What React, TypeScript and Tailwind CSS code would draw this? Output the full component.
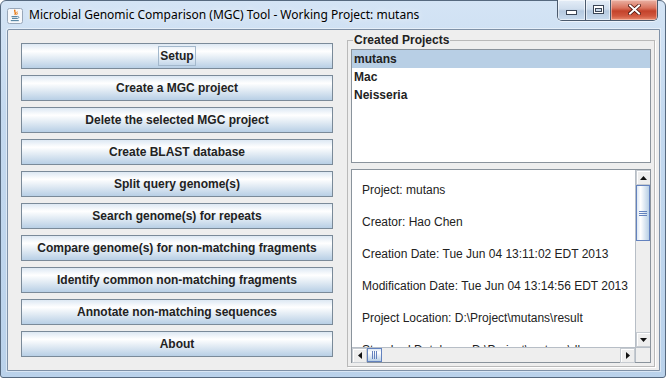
import React from "react";

const actions = [
  "Setup",
  "Create a MGC project",
  "Delete the selected MGC project",
  "Create BLAST database",
  "Split query genome(s)",
  "Search genome(s) for repeats",
  "Compare genome(s) for non-matching fragments",
  "Identify common non-matching fragments",
  "Annotate non-matching sequences",
  "About",
];

const projects = ["mutans", "Mac", "Neisseria"];

const details = [
  "Project: mutans",
  "Creator: Hao Chen",
  "Creation Date: Tue Jun 04 13:11:02 EDT 2013",
  "Modification Date: Tue Jun 04 13:14:56 EDT 2013",
  "Project Location: D:\\Project\\mutans\\result",
  "Standard Database: D:\\Project\\mutans\\db",
];

type Dir = "up" | "down" | "left" | "right";

const Arrow = ({ dir }: { dir: Dir }) => {
  const vertical = dir === "up" || dir === "down";
  const points = {
    up: "0,4 7,4 3.5,0",
    down: "0,0 7,0 3.5,4",
    left: "4,0 4,7 0,3.5",
    right: "0,0 0,7 4,3.5",
  }[dir];
  return (
    <svg width={vertical ? 7 : 4} height={vertical ? 4 : 7} viewBox={vertical ? "0 0 7 4" : "0 0 4 7"}>
      <polygon points={points} fill="#111" />
    </svg>
  );
};

const ScrollButton = ({ dir }: { dir: Dir }) => (
  <div className="flex size-[15px] shrink-0 items-center justify-center border border-[#c6cbd1] bg-[#eeeeee] shadow-[inset_1px_1px_0_#ffffff]">
    <Arrow dir={dir} />
  </div>
);

const JavaIcon = () => (
  <svg width="16" height="16" viewBox="0 0 16 16">
    <rect x="0.5" y="0.5" width="15" height="15" rx="2" fill="#f6f8fb" stroke="#98a7b9" />
    <path d="M8.2 1.8c-2 1.8 1.6 2.6 -0.4 5" stroke="#e76f00" strokeWidth="1.3" fill="none" />
    <path d="M10.2 3.6c-1.2 1 1 1.6 -0.6 3.2" stroke="#e76f00" strokeWidth="1" fill="none" />
    <path d="M4.5 8.6h6" stroke="#5382a1" strokeWidth="1.1" />
    <path d="M5 10.4h5.2" stroke="#5382a1" strokeWidth="1.1" />
    <path d="M10.6 8.4c1.8 0 1.6 2 -0.4 2.2" stroke="#5382a1" strokeWidth="0.9" fill="none" />
    <path d="M3.8 12.6h8" stroke="#5382a1" strokeWidth="1.1" />
  </svg>
);

const CaptionButtons = () => (
  <div className="-mt-[1px] mr-[7px] flex h-[21px] overflow-hidden rounded-b-[5px] border border-t-0 border-[#4b5a6d] shadow-[0_1px_0_rgba(255,255,255,0.6)]">
    <div className="flex w-[28px] items-end justify-center border-r border-[#4b5a6d] bg-[linear-gradient(180deg,#e4edf7_0%,#cfdded_45%,#b5c9df_55%,#c8dbee_100%)] pb-[5px] shadow-[inset_0_0_0_1px_rgba(255,255,255,0.55)]">
      <svg width="11" height="5" viewBox="0 0 11 5">
        <rect x="0" y="0" width="11" height="5" fill="#3a4555" />
        <rect x="1" y="1" width="9" height="3" fill="#ffffff" />
      </svg>
    </div>
    <div className="flex w-[25px] items-center justify-center border-r border-[#4b5a6d] bg-[linear-gradient(180deg,#e4edf7_0%,#cfdded_45%,#b5c9df_55%,#c8dbee_100%)] pb-[2px] shadow-[inset_0_0_0_1px_rgba(255,255,255,0.55)]">
      <svg width="11" height="9" viewBox="0 0 11 9">
        <rect x="0" y="0" width="11" height="9" fill="#3a4555" />
        <rect x="1" y="1" width="9" height="7" fill="#ffffff" />
        <rect x="2" y="3" width="7" height="4" fill="#3a4555" />
        <rect x="3" y="4" width="5" height="2" fill="#c9d9ea" />
      </svg>
    </div>
    <div className="flex w-[46px] items-center justify-center bg-[linear-gradient(180deg,#eab2a4_0%,#d9735d_40%,#c4432b_55%,#d0583f_80%,#e98c6f_100%)] pb-[2px] shadow-[inset_0_0_0_1px_rgba(255,220,210,0.5)]">
      <svg width="13" height="11" viewBox="0 0 13 11">
        <path d="M2 1.5l9 8M11 1.5l-9 8" stroke="#4a140c" strokeWidth="3.6" strokeLinecap="square" />
        <path d="M2 1.5l9 8M11 1.5l-9 8" stroke="#ffffff" strokeWidth="2" strokeLinecap="square" />
      </svg>
    </div>
  </div>
);

const VerticalScrollBar = () => (
  <div className="flex w-[15px] flex-col border-l border-[#b7bec6] bg-[#eeeeee]">
    <ScrollButton dir="up" />
    <div className="flex h-[56px] items-center justify-center border border-[#6382be] bg-[linear-gradient(90deg,#dde8f3_0%,#ffffff_30%,#b8cfe5_100%)]">
      <div className="flex flex-col gap-[1px]">
        <div className="h-[1px] w-[8px] bg-[#6382be]" />
        <div className="h-[1px] w-[8px] bg-[#6382be]" />
        <div className="h-[1px] w-[8px] bg-[#6382be]" />
      </div>
    </div>
    <div className="flex-1" />
    <ScrollButton dir="down" />
  </div>
);

const HorizontalScrollBar = () => (
  <div className="flex h-[15px] flex-1 border-t border-[#b7bec6] bg-[#eeeeee]">
    <ScrollButton dir="left" />
    <div className="flex w-[15px] items-center justify-center border border-[#6382be] bg-[linear-gradient(180deg,#dde8f3_0%,#ffffff_30%,#b8cfe5_100%)]">
      <div className="flex gap-[1px]">
        <div className="h-[8px] w-[1px] bg-[#6382be]" />
        <div className="h-[8px] w-[1px] bg-[#6382be]" />
        <div className="h-[8px] w-[1px] bg-[#6382be]" />
      </div>
    </div>
    <div className="flex-1" />
    <ScrollButton dir="right" />
  </div>
);

export default function App() {
  return (
    <div className="flex h-[378px] w-[666px] flex-col rounded-t-[6px] rounded-b-[3px] border border-[#56697f] bg-[linear-gradient(180deg,#d4e4f5_0%,#c4d9ef_30%,#bad2eb_100%)] font-['Liberation_Sans',Arial,sans-serif]">
      <div className="flex h-[28px] shrink-0 items-start">
        <div className="ml-[6px] mt-[7px]">
          <JavaIcon />
        </div>
        <div className="ml-[6px] mt-[6px] flex-1 font-['Noto_Sans',sans-serif] text-[12px] leading-[16px] text-black [text-shadow:0_0_6px_rgba(255,255,255,0.95)]">
          Microbial Genomic Comparison (MGC) Tool - Working Project: mutans
        </div>
        <CaptionButtons />
      </div>

      <div className="ml-[6px] mr-[5px] mb-[6px] flex flex-1 rounded-tl-[2px] border border-[#7f91a7] bg-[#eeeeee] shadow-[0_0_0_1px_rgba(255,255,255,0.45)]">
        <div className="flex flex-col gap-[6px] pl-[13px] pt-[13px]">
          {actions.map((label, i) => (
            <button
              key={label}
              className="flex h-[26px] w-[312px] items-center justify-center border border-[#7a8a99] bg-[linear-gradient(180deg,#dde8f3_0%,#ffffff_30%,#b8cfe5_100%)] text-[12px] font-bold leading-[14px] text-[#222]"
            >
              {i === 0 ? (
                <span className="border border-[#a3b8cc] px-[1px] py-[2px]">{label}</span>
              ) : (
                label
              )}
            </button>
          ))}
        </div>

        <fieldset className="ml-[14px] mt-[4px] h-[333px] w-[308px] border border-[#b9b9b9] px-[3px] shadow-[1px_1px_0_#ffffff]">
          <legend className="ml-[2px] px-[1px] text-[12px] font-bold leading-[13px] text-[#222]">Created Projects</legend>
          <div className="mt-[2px] h-[114px] border border-[#8a939c] bg-white">
            {projects.map((p, i) => (
              <div
                key={p}
                className={`h-[18px] pl-[2px] text-[12px] font-bold leading-[18px] text-[#222] ${i === 0 ? "bg-[#b8cfe5]" : ""}`}
              >
                {p}
              </div>
            ))}
          </div>

          <div className="mt-[6px] flex h-[194px] flex-col border border-[#8a939c] bg-white">
            <div className="flex flex-1 overflow-hidden">
              <div className="flex flex-1 flex-col gap-[16px] overflow-hidden pl-[10px] pt-[12px] text-[12px] leading-[16px] text-[#222]">
                {details.map((d) => (
                  <div key={d} className="whitespace-nowrap">
                    {d}
                  </div>
                ))}
              </div>
              <VerticalScrollBar />
            </div>
            <div className="flex">
              <HorizontalScrollBar />
              <div className="h-[15px] w-[15px] border-l border-t border-[#b7bec6] bg-[#eeeeee]" />
            </div>
          </div>
        </fieldset>
      </div>
    </div>
  );
}
